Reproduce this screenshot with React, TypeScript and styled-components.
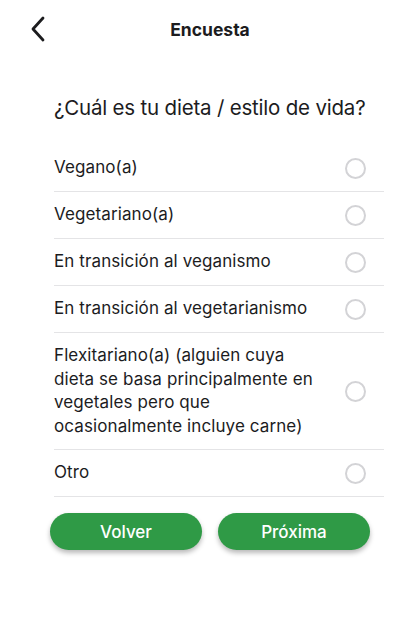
import React, { useState } from 'react'
import styled, { createGlobalStyle } from 'styled-components'

const GlobalStyle = createGlobalStyle`
  html, body {
    margin: 0;
    padding: 0;
    background: #ffffff;
  }
  body {
    font-family: Inter, 'Noto Sans', 'Liberation Sans', sans-serif;
    color: #1c1c1e;
    -webkit-font-smoothing: antialiased;
  }
  * {
    box-sizing: border-box;
  }
`

const options = [
  'Vegano(a)',
  'Vegetariano(a)',
  'En transición al veganismo',
  'En transición al vegetarianismo',
  'Flexitariano(a) (alguien cuya dieta se basa principalmente en vegetales pero que ocasionalmente incluye carne)',
  'Otro',
]

export default function App() {
  const [selected, setSelected] = useState<number | null>(null)

  return (
    <Screen>
      <GlobalStyle />
      <Header>
        <BackButton aria-label="Atrás">
          <svg width="16" height="26" viewBox="0 0 16 26" fill="none">
            <polyline
              points="13,2 3,13 13,24"
              stroke="#1c1c1e"
              strokeWidth="2.8"
              strokeLinecap="round"
              strokeLinejoin="round"
            />
          </svg>
        </BackButton>
        <Title>Encuesta</Title>
        <span />
      </Header>

      <Content>
        <Question>¿Cuál es tu dieta / estilo de vida?</Question>
        <List>
          {options.map((label, i) => (
            <Row key={label} onClick={() => setSelected(i)}>
              <Label>{label}</Label>
              <Radio $checked={selected === i} />
            </Row>
          ))}
        </List>
      </Content>

      <Actions>
        <ActionButton>Volver</ActionButton>
        <ActionButton>Próxima</ActionButton>
      </Actions>
    </Screen>
  )
}

const Screen = styled.div`
  width: 420px;
  min-height: 618px;
  background: #ffffff;
`

const Header = styled.header`
  height: 58px;
  display: grid;
  grid-template-columns: 1fr auto 1fr;
  align-items: center;
  padding: 0 30px;
`

const BackButton = styled.button`
  justify-self: start;
  display: flex;
  align-items: center;
  background: none;
  border: none;
  padding: 0;
  cursor: pointer;
`

const Title = styled.h1`
  margin: 0;
  font-size: 17.5px;
  font-weight: 700;
  letter-spacing: 0;
  color: #1c1c1e;
`

const Content = styled.main`
  padding: 0 36px 0 54px;
`

const Question = styled.h2`
  margin: 36px 0 23px;
  font-size: 20.5px;
  line-height: 28px;
  font-weight: 400;
  letter-spacing: -0.2px;
  color: #1c1c1e;
`

const List = styled.div`
  display: flex;
  flex-direction: column;
`

const Row = styled.label`
  display: flex;
  align-items: center;
  justify-content: space-between;
  min-height: 47px;
  padding: 11px 18px 11px 0;
  border-bottom: 1px solid #e4e4e6;
  cursor: pointer;
`

const Label = styled.span`
  max-width: 272px;
  font-size: 17px;
  line-height: 23.5px;
  letter-spacing: 0.1px;
  color: #1c1c1e;
`

const Radio = styled.span<{ $checked: boolean }>`
  flex: none;
  width: 21px;
  height: 21px;
  border-radius: 50%;
  border: 2px solid ${(p) => (p.$checked ? '#2f9a46' : '#d3d3d6')};
  background: ${(p) => (p.$checked ? 'radial-gradient(circle, #2f9a46 45%, #fff 50%)' : '#fff')};
`

const Actions = styled.div`
  display: flex;
  gap: 16px;
  padding: 16px 50px 0;
`

const ActionButton = styled.button`
  flex: 1;
  height: 37px;
  border: none;
  border-radius: 19px;
  background: #2f9a46;
  color: #ffffff;
  font-family: inherit;
  font-size: 17px;
  font-weight: 500;
  box-shadow: 0 3px 5px rgba(0, 0, 0, 0.28);
  cursor: pointer;
`
